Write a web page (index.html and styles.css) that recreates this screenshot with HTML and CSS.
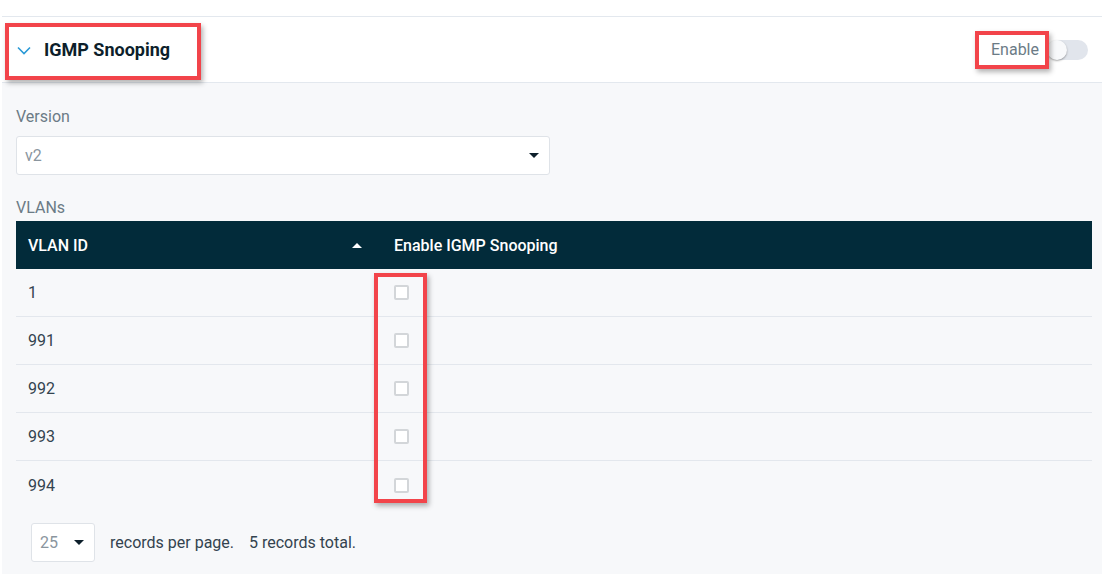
FILE: index.html
```html
<!DOCTYPE html>
<html lang="en">
<head>
  <meta charset="UTF-8" />
  <title>IGMP Snooping</title>
  <link rel="stylesheet" href="styles.css">
</head>
<body>
  <div class="panel">
    <div class="panel-header">
      <div class="title">
        <svg class="chevron" width="14" height="9" viewBox="0 0 14 9"><path d="M1 1.5 L7 7.5 L13 1.5" fill="none" stroke="#2a9ad6" stroke-width="1.6"/></svg>
        <span>IGMP Snooping</span>
        <div class="mark mark-title"></div>
      </div>
      <div class="enable">
        <span class="enable-label">Enable</span>
        <div class="toggle"><div class="knob"></div></div>
        <div class="mark mark-enable"></div>
      </div>
    </div>

    <div class="panel-body">
      <div class="field-label">Version</div>
      <div class="select">
        <span>v2</span>
        <span class="caret"></span>
      </div>

      <div class="field-label vlans">VLANs</div>
      <div class="table">
        <div class="thead">
          <div class="col-id">VLAN ID <span class="sort"></span></div>
          <div class="col-en">Enable IGMP Snooping</div>
        </div>
        <div class="rows">
          <div class="row"><div class="col-id">1</div><div class="col-en"><span class="check"></span></div></div>
          <div class="row"><div class="col-id">991</div><div class="col-en"><span class="check"></span></div></div>
          <div class="row"><div class="col-id">992</div><div class="col-en"><span class="check"></span></div></div>
          <div class="row"><div class="col-id">993</div><div class="col-en"><span class="check"></span></div></div>
          <div class="row last"><div class="col-id">994</div><div class="col-en"><span class="check"></span></div></div>
          <div class="mark mark-checks"></div>
        </div>
      </div>

      <div class="pager">
        <div class="select small">
          <span>25</span>
          <span class="caret"></span>
        </div>
        <span>records per page.</span>
        <span class="total">5 records total.</span>
      </div>
    </div>
  </div>
</body>
</html>
```

FILE: styles.css
```css
body {
  margin: 0;
  font-family: Roboto, "Liberation Sans", sans-serif;
  background: #fff;
  color: #33434f;
}
.panel {
  margin: 16px 0 0 2px;
  width: 1100px;
  border-top: 1px solid #e3e8ee;
}
.panel-header {
  height: 65px;
  background: #fff;
  border-bottom: 1px solid #e3e8ee;
  display: flex;
  align-items: center;
  justify-content: space-between;
}
.title {
  position: relative;
  display: flex;
  align-items: center;
  gap: 13px;
  padding-left: 15px;
  font-size: 18px;
  font-weight: bold;
  color: #0d1f2b;
  height: 100%;
}
.chevron {
  margin-top: 1px;
}
.enable {
  position: relative;
  display: flex;
  align-items: center;
  gap: 11px;
  padding-right: 14px;
  font-size: 16px;
  color: #6b7b86;
  height: 100%;
}
.toggle {
  position: relative;
  width: 38px;
  height: 20px;
  border-radius: 10px;
  background: #e1e5ec;
}
.knob {
  position: absolute;
  left: -3px;
  top: 0;
  width: 20px;
  height: 20px;
  border-radius: 50%;
  background: #f8f9fb;
  box-shadow: 0 1px 2px rgba(0, 0, 0, 0.35);
}
.mark {
  position: absolute;
  border: 4px solid #f2444a;
  box-shadow: 2px 3px 5px rgba(0, 0, 0, 0.3);
  pointer-events: none;
}
.mark-title {
  left: 3px;
  top: 6px;
  width: 188px;
  height: 49px;
}
.mark-enable {
  left: -16px;
  top: 14px;
  width: 66px;
  height: 30px;
}
.mark-checks {
  left: 358px;
  top: 4px;
  width: 45px;
  height: 222px;
}
.panel-body {
  background: #f7f8fa;
  padding: 24px 10px 12px 14px;
}
.field-label {
  font-size: 16px;
  color: #6b7b86;
  height: 20px;
  line-height: 20px;
  margin-bottom: 9px;
}
.vlans {
  margin-bottom: 4px;
  height: 18px;
  line-height: 18px;
}
.select {
  width: 514px;
  height: 37px;
  background: #fff;
  border: 1px solid #dfe3e8;
  border-radius: 3px;
  display: flex;
  align-items: center;
  justify-content: space-between;
  padding: 0 10px 0 8px;
  box-sizing: content-box;
  font-size: 16px;
  color: #8a959e;
  margin-bottom: 24px;
}
.caret {
  width: 0;
  height: 0;
  border-left: 5px solid transparent;
  border-right: 5px solid transparent;
  border-top: 5px solid #0d1f2b;
}
.table {
  width: 1076px;
}
.thead {
  display: flex;
  align-items: center;
  height: 48px;
  background: #022b3a;
  color: #fff;
  font-size: 16px;
  font-weight: 500;
}
.col-id {
  width: 366px;
  box-sizing: border-box;
  padding-left: 12px;
  padding-right: 20px;
  display: flex;
  align-items: center;
  justify-content: space-between;
}
.col-en {
  flex: 1;
  padding-left: 12px;
  display: flex;
  align-items: center;
}
.sort {
  width: 0;
  height: 0;
  border-left: 5px solid transparent;
  border-right: 5px solid transparent;
  border-bottom: 5px solid #fff;
}
.rows {
  position: relative;
}
.row {
  display: flex;
  align-items: center;
  height: 47px;
  border-bottom: 1px solid #e3e7ed;
  font-size: 16px;
  color: #33434f;
}
.row.last {
  border-bottom: none;
  height: 48px;
}
.row .col-en {
  padding-left: 12px;
}
.check {
  width: 11px;
  height: 11px;
  background: #fff;
  border: 2px solid #d3d6d9;
  border-radius: 2px;
}
.pager {
  display: flex;
  align-items: center;
  gap: 15px;
  margin-top: 14px;
  margin-left: 15px;
  font-size: 16px;
  color: #33434f;
}
.select.small {
  width: 44px;
  height: 37px;
  margin: 0;
  padding: 0 10px 0 8px;
}
```
